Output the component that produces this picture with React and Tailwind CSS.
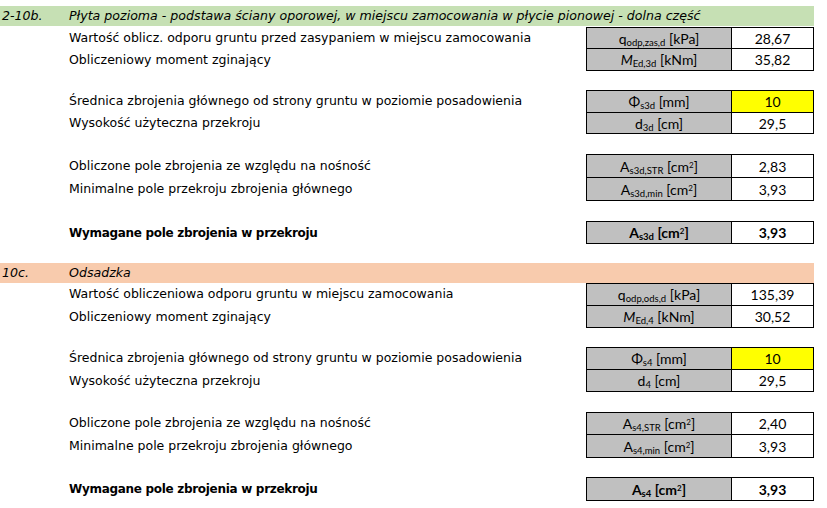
import React from "react";

const LEFT = { fontFamily: '"DejaVu Sans", Verdana, sans-serif' };
const CELL = { fontFamily: 'Lato, "Liberation Sans", sans-serif' };

function Header({ code, title, bg }) {
  return (
    <div className={`flex items-center h-[20px] w-[814px] italic text-[12.6px] text-black ${bg}`} style={LEFT}>
      <span className="w-[69px] pl-[2px]">{code}</span>
      <span>{title}</span>
    </div>
  );
}

function Row({ label, cell, value, h, first, bold, yellow }) {
  return (
    <div className={`flex ${h}`}>
      <div
        className={`w-[586px] pl-[69px] flex items-center text-black ${bold ? "font-bold text-[12px] tracking-[-0.3px]" : "text-[12.5px]"}`}
        style={LEFT}
      >
        {label}
      </div>
      <div
        className={`w-[146px] flex items-center justify-center bg-[#c0c0c0] border-l border-r border-b border-black text-[14px] text-black ${first ? "border-t" : ""} ${bold ? "font-bold" : ""}`}
        style={CELL}
      >
        <span>{cell}</span>
      </div>
      <div
        className={`w-[82px] flex items-center justify-center border-r border-b border-black text-[14px] text-black ${first ? "border-t" : ""} ${bold ? "font-bold" : ""} ${yellow ? "bg-[#ffff00]" : "bg-white"}`}
        style={CELL}
      >
        {value}
      </div>
    </div>
  );
}

const S = ({ children }) => <sub className="text-[9.5px]">{children}</sub>;
const Sq = () => <sup className="text-[8px]">2</sup>;

export default function App() {
  return (
    <div className="w-[827px] h-[508px] bg-white overflow-hidden flex flex-col">
      <div className="h-[6px]" />
      <Header
        code="2-10b."
        title="Płyta pozioma - podstawa ściany oporowej, w miejscu zamocowania w płycie pionowej - dolna część"
        bg="bg-[#c6e0b4]"
      />
      <div className="h-[1px]" />
      <Row
        first
        h="h-[22px]"
        label="Wartość oblicz. odporu gruntu przed zasypaniem w miejscu zamocowania"
        cell={<>q<S>odp,zas,d</S> [kPa]</>}
        value="28,67"
      />
      <Row
        h="h-[22px]"
        label="Obliczeniowy moment zginający"
        cell={<><i>M</i><S>Ed,3d</S> [kNm]</>}
        value="35,82"
      />
      <div className="h-[19px]" />
      <Row
        first
        yellow
        h="h-[23px]"
        label="Średnica zbrojenia głównego od strony gruntu w poziomie posadowienia"
        cell={<>Φ<S>s3d</S> [mm]</>}
        value="10"
      />
      <Row
        h="h-[21px]"
        label="Wysokość użyteczna przekroju"
        cell={<>d<S>3d</S> [cm]</>}
        value="29,5"
      />
      <div className="h-[20px]" />
      <Row
        first
        h="h-[24px]"
        label="Obliczone pole zbrojenia ze względu na nośność"
        cell={<>A<S>s3d,STR</S> [cm<Sq />]</>}
        value="2,83"
      />
      <Row
        h="h-[23px]"
        label="Minimalne pole przekroju zbrojenia głównego"
        cell={<>A<S>s3d,min</S> [cm<Sq />]</>}
        value="3,93"
      />
      <div className="h-[20px]" />
      <Row
        first
        bold
        h="h-[23px]"
        label="Wymagane pole zbrojenia w przekroju"
        cell={<>A<S>s3d</S> [cm<Sq />]</>}
        value="3,93"
      />
      <div className="h-[19px]" />
      <Header code="10c." title="Odsadzka" bg="bg-[#f8cbad]" />
      <Row
        first
        h="h-[23px]"
        label="Wartość obliczeniowa odporu gruntu w miejscu zamocowania"
        cell={<>q<S>odp,ods,d</S> [kPa]</>}
        value="135,39"
      />
      <Row
        h="h-[22px]"
        label="Obliczeniowy moment zginający"
        cell={<><i>M</i><S>Ed,4</S> [kNm]</>}
        value="30,52"
      />
      <div className="h-[19px]" />
      <Row
        first
        yellow
        h="h-[23px]"
        label="Średnica zbrojenia głównego od strony gruntu w poziomie posadowienia"
        cell={<>Φ<S>s4</S> [mm]</>}
        value="10"
      />
      <Row
        h="h-[22px]"
        label="Wysokość użyteczna przekroju"
        cell={<>d<S>4</S> [cm]</>}
        value="29,5"
      />
      <div className="h-[20px]" />
      <Row
        first
        h="h-[23px]"
        label="Obliczone pole zbrojenia ze względu na nośność"
        cell={<>A<S>s4,STR</S> [cm<Sq />]</>}
        value="2,40"
      />
      <Row
        h="h-[23px]"
        label="Minimalne pole przekroju zbrojenia głównego"
        cell={<>A<S>s4,min</S> [cm<Sq />]</>}
        value="3,93"
      />
      <div className="h-[19px]" />
      <Row
        first
        bold
        h="h-[24px]"
        label="Wymagane pole zbrojenia w przekroju"
        cell={<>A<S>s4</S> [cm<Sq />]</>}
        value="3,93"
      />
    </div>
  );
}
